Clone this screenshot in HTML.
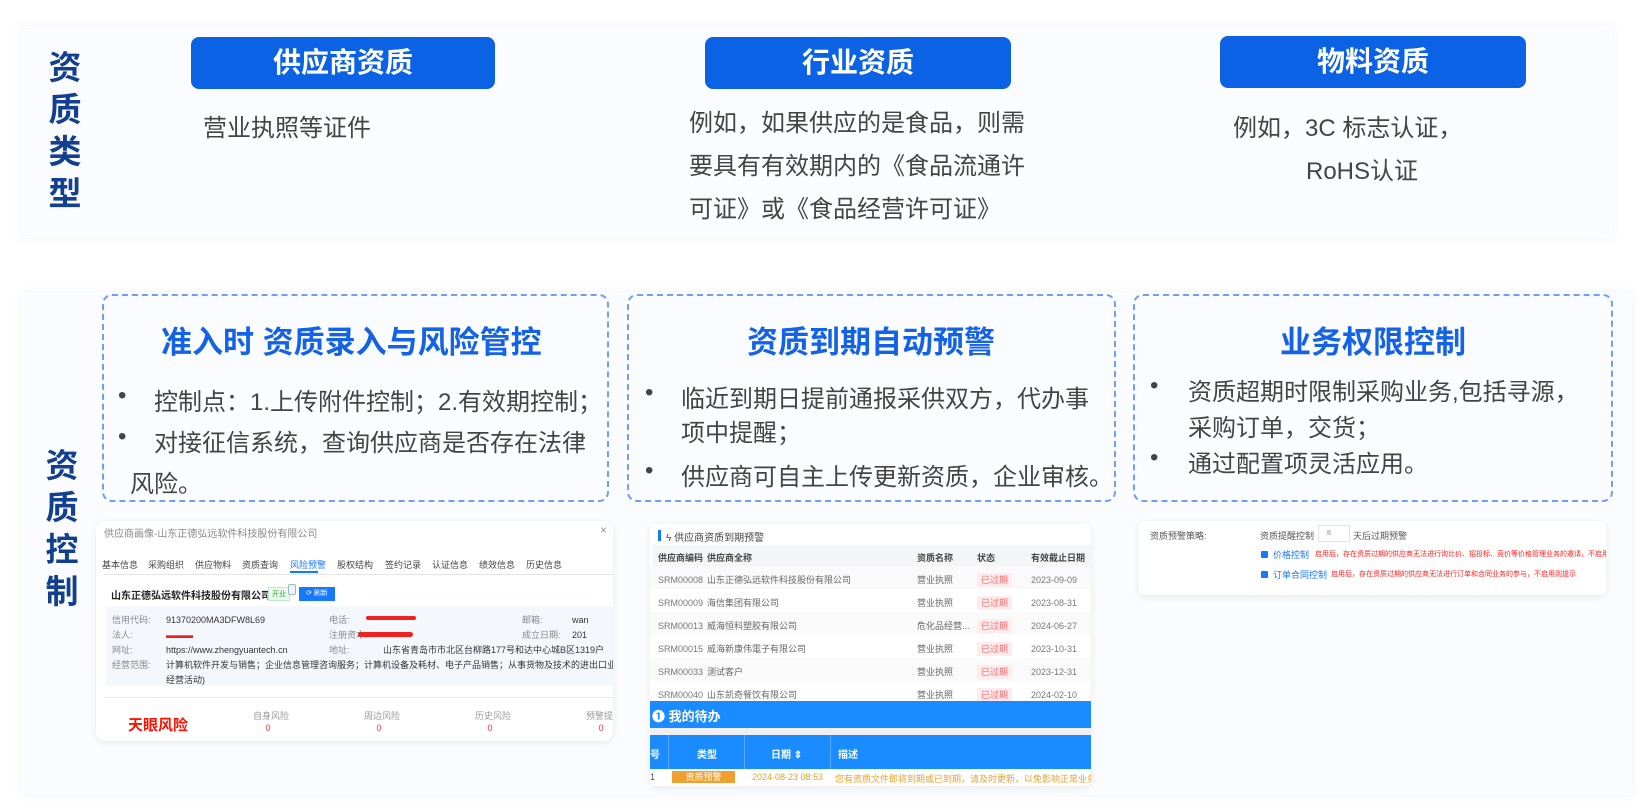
<!DOCTYPE html>
<html><head><meta charset="utf-8">
<style>
*{margin:0;padding:0;box-sizing:border-box}
body{width:1644px;height:810px;background:#fff;position:relative;overflow:hidden;font-family:"Liberation Sans","Noto Sans CJK SC",sans-serif;color:#333}
.a{position:absolute;white-space:nowrap}
.panel{position:absolute;background:#fafcff;box-shadow:0 0 8px rgba(0,0,0,.06)}
.vlab{position:absolute;width:40px;text-align:center;font-weight:bold;font-size:33px;color:#123f8f;line-height:42px}
.hdr{position:absolute;height:52px;background:#0b62e4;border-radius:8px;color:#fff;font-weight:bold;font-size:28px;text-align:center;line-height:52px}
.t22{font-size:24px;color:#444}
.dash{position:absolute;border:2px dashed #6fa0f0;border-radius:10px}
.ttl{position:absolute;font-size:31px;font-weight:bold;color:#1463e6;white-space:nowrap}
.card{position:absolute;background:#fff;border-radius:10px;box-shadow:0 2px 8px rgba(0,0,0,.08);overflow:hidden}
.s9{font-size:9px;color:#666}
</style></head><body>

<div class="panel" style="left:20px;top:26px;width:1593px;height:212px"></div>
<div class="vlab" style="left:45px;top:47px">资<br>质<br>类<br>型</div>
<div class="hdr" style="left:191px;top:37px;width:304px">供应商资质</div>
<div class="hdr" style="left:705px;top:37px;width:306px">行业资质</div>
<div class="hdr" style="left:1220px;top:36px;width:306px">物料资质</div>
<div class="a t22" style="left:203px;top:108px">营业执照等证件</div>
<div class="a t22" style="left:689px;top:102px;line-height:43px">例如，如果供应的是食品，则需<br>要具有有效期内的《食品流通许<br>可证》或《食品经营许可证》</div>
<div class="a t22" style="left:1233px;top:108px">例如，3C 标志认证，</div>
<div class="a t22" style="left:1306px;top:151px">RoHS认证</div>

<div class="panel" style="left:21px;top:292px;width:1611px;height:503px"></div>
<div class="vlab" style="left:42px;top:445px">资<br>质<br>控<br>制</div>

<div class="dash" style="left:102px;top:294px;width:507px;height:208px"></div>
<div class="dash" style="left:627px;top:294px;width:489px;height:208px"></div>
<div class="dash" style="left:1133px;top:294px;width:480px;height:208px"></div>
<div class="ttl" style="left:161px;top:317px">准入时 资质录入与风险管控</div>
<div class="ttl" style="left:747px;top:317px">资质到期自动预警</div>
<div class="ttl" style="left:1280px;top:317px">业务权限控制</div>

<div class="a t22" style="left:118px;top:382px">•</div><div class="a t22" style="left:154px;top:382px">控制点：1.上传附件控制；2.有效期控制；</div>
<div class="a t22" style="left:118px;top:423px">•</div><div class="a t22" style="left:154px;top:423px">对接征信系统，查询供应商是否存在法律</div>
<div class="a t22" style="left:130px;top:464px">风险。</div>

<div class="a t22" style="left:645px;top:379px">•</div><div class="a t22" style="left:681px;top:379px">临近到期日提前通报采供双方，代办事</div>
<div class="a t22" style="left:681px;top:413px">项中提醒；</div>
<div class="a t22" style="left:645px;top:457px">•</div><div class="a t22" style="left:681px;top:457px">供应商可自主上传更新资质，企业审核。</div>

<div class="a t22" style="left:1150px;top:372px">•</div><div class="a t22" style="left:1188px;top:372px">资质超期时限制采购业务,包括寻源，</div>
<div class="a t22" style="left:1188px;top:408px">采购订单，交货；</div>
<div class="a t22" style="left:1150px;top:444px">•</div><div class="a t22" style="left:1188px;top:444px">通过配置项灵活应用。</div>

<!-- left card -->
<div class="card" style="left:96px;top:521px;width:517px;height:220px">
 <div class="a s9" style="left:8px;top:4px;font-size:10px;color:#888">供应商画像-山东正德弘远软件科技股份有限公司</div>
 <div class="a s9" style="left:504px;top:2px;font-size:12px;color:#999">×</div>
 <div class="a s9" style="left:6px;top:37px;color:#444">基本信息</div>
 <div class="a s9" style="left:52px;top:37px;color:#444">采购组织</div>
 <div class="a s9" style="left:99px;top:37px;color:#444">供应物料</div>
 <div class="a s9" style="left:146px;top:37px;color:#444">资质查询</div>
 <div class="a s9" style="left:194px;top:37px;color:#1677ff">风险预警</div>
 <div style="position:absolute;left:194px;top:50px;width:28px;height:2px;background:#1677ff"></div>
 <div class="a s9" style="left:241px;top:37px;color:#444">股权结构</div>
 <div class="a s9" style="left:289px;top:37px;color:#444">签约记录</div>
 <div class="a s9" style="left:336px;top:37px;color:#444">认证信息</div>
 <div class="a s9" style="left:383px;top:37px;color:#444">绩效信息</div>
 <div class="a s9" style="left:430px;top:37px;color:#444">历史信息</div>
 <div style="position:absolute;left:8px;top:53px;width:509px;height:1px;background:#e5e5e5"></div>
 <div class="a" style="left:15px;top:66px;font-size:10px;font-weight:bold;color:#222">山东正德弘远软件科技股份有限公司</div>
 <div class="a" style="left:172px;top:66px;font-size:7px;color:#3a3;background:#eafaf0;border:1px solid #bfe8cc;padding:1px 3px">开业</div>
 <div style="position:absolute;left:192px;top:63px;width:8px;height:11px;border:1px solid #9bb;border-radius:2px;background:#eef3ff"></div>
 <div class="a" style="left:203px;top:66px;width:36px;height:14px;background:#1677ff;color:#fff;font-size:7px;text-align:center;line-height:14px">⟳ 刷新</div>
 <div style="position:absolute;left:10px;top:85px;width:507px;height:80px;background:#f4f8fd"></div>
 <div class="a s9" style="left:16px;top:92px;line-height:15px;color:#888">信用代码:<br>法人:<br>网址:<br>经营范围:</div>
 <div class="a s9" style="left:70px;top:92px;line-height:15px;color:#333">91370200MA3DFW8L69<br><span style="color:#e22">▬▬▬</span><br>https://www.zhengyuantech.cn<br>计算机软件开发与销售；企业信息管理咨询服务；计算机设备及耗材、电子产品销售；从事货物及技术的进出口业务。（依法须经<br>经营活动)</div>
 <div class="a s9" style="left:233px;top:92px;line-height:15px;color:#888">电话:<br>注册资本:</div>
 <div class="a s9" style="left:233px;top:122px;color:#888">地址:</div>
 <div class="a" style="left:270px;top:95px;width:50px;height:4px;background:#e22;border-radius:2px"></div>
 <div class="a" style="left:262px;top:111px;width:55px;height:5px;background:#e22;border-radius:3px"></div>
 <div class="a s9" style="left:287px;top:122px;color:#333">山东省青岛市市北区台柳路177号和达中心城B区1319户</div>
 <div class="a s9" style="left:426px;top:92px;line-height:15px;color:#888">邮箱:<br>成立日期:</div>
 <div class="a s9" style="left:476px;top:92px;line-height:15px;color:#333">wan<br>201</div>
 <div style="position:absolute;left:8px;top:176px;width:509px;height:1px;background:#e8e8e8"></div>
 <div class="a" style="left:32px;top:193px;font-size:15px;font-weight:bold;color:#f10">天眼风险</div>
 <div class="a s9" style="left:157px;top:189px;width:30px;text-align:center;color:#999;line-height:12px">自身风险<br><span style="color:#f33">0</span></div>
 <div class="a s9" style="left:268px;top:189px;width:30px;text-align:center;color:#999;line-height:12px">周边风险<br><span style="color:#f33">0</span></div>
 <div class="a s9" style="left:379px;top:189px;width:30px;text-align:center;color:#999;line-height:12px">历史风险<br><span style="color:#f33">0</span></div>
 <div class="a s9" style="left:490px;top:189px;width:30px;text-align:center;color:#999;line-height:12px">预警提醒<br><span style="color:#f33">0</span></div>
</div>

<!-- middle card -->
<div class="card" style="left:650px;top:524px;width:441px;height:262px;border-radius:6px">
 <div style="position:absolute;left:8px;top:6px;width:3px;height:11px;background:#1677ff"></div>
 <div class="a s9" style="left:16px;top:5px;font-size:10px;color:#444">ϟ 供应商资质到期预警</div>
 <div style="position:absolute;left:2px;top:21px;width:439px;height:21px;background:#f4f5f7"></div>
 <div class="a s9" style="left:8px;top:27px;color:#444;font-weight:bold">供应商编码</div>
 <div class="a s9" style="left:57px;top:27px;color:#444;font-weight:bold">供应商全称</div>
 <div class="a s9" style="left:267px;top:27px;color:#444;font-weight:bold">资质名称</div>
 <div class="a s9" style="left:327px;top:27px;color:#444;font-weight:bold">状态</div>
 <div class="a s9" style="left:381px;top:27px;color:#444;font-weight:bold">有效截止日期</div>
 <div style="position:absolute;left:0;top:42px;width:441px;height:23px;background:#fafafa"></div>
 <div style="position:absolute;left:0;top:88px;width:441px;height:23px;background:#fafafa"></div>
 <div style="position:absolute;left:0;top:134px;width:441px;height:23px;background:#fafafa"></div>
 <div class="a s9" style="left:8px;top:45px;line-height:23px;color:#777">SRM00008<br>SRM00009<br>SRM00013<br>SRM00015<br>SRM00033<br>SRM00040</div>
 <div class="a s9" style="left:57px;top:45px;line-height:23px;color:#666">山东正德弘远软件科技股份有限公司<br>海信集团有限公司<br>威海恒科塑胶有限公司<br>威海新康伟電子有限公司<br>测试客户<br>山东凯奇餐饮有限公司</div>
 <div class="a s9" style="left:267px;top:45px;line-height:23px;color:#666">营业执照<br>营业执照<br>危化品经营...<br>营业执照<br>营业执照<br>营业执照</div>
 <div class="a s9" style="left:327px;top:45px;line-height:23px;color:#f56c6c"><span style="background:#fdeced;padding:2px 4px">已过期</span><br><span style="background:#fdeced;padding:2px 4px">已过期</span><br><span style="background:#fdeced;padding:2px 4px">已过期</span><br><span style="background:#fdeced;padding:2px 4px">已过期</span><br><span style="background:#fdeced;padding:2px 4px">已过期</span><br><span style="background:#fdeced;padding:2px 4px">已过期</span></div>
 <div class="a s9" style="left:381px;top:45px;line-height:23px;color:#777">2023-09-09<br>2023-08-31<br>2024-06-27<br>2023-10-31<br>2023-12-31<br>2024-02-10</div>
 <div style="position:absolute;left:0;top:177px;width:441px;height:27px;background:#1a8cff"></div>
 <div class="a" style="left:2px;top:182px;font-size:13px;font-weight:bold;color:#fff">❶ 我的待办</div>
 <div style="position:absolute;left:0;top:204px;width:441px;height:7px;background:#eef0f3"></div>
 <div style="position:absolute;left:0;top:211px;width:441px;height:34px;background:#1a8cff"></div>
 <div style="position:absolute;left:18px;top:211px;width:1px;height:34px;background:#5aaaff"></div>
 <div style="position:absolute;left:94px;top:211px;width:1px;height:34px;background:#5aaaff"></div>
 <div style="position:absolute;left:180px;top:211px;width:1px;height:34px;background:#5aaaff"></div>
 <div class="a" style="left:0;top:222px;font-size:10px;font-weight:bold;color:#fff">号</div>
 <div class="a" style="left:47px;top:222px;font-size:10px;font-weight:bold;color:#fff">类型</div>
 <div class="a" style="left:121px;top:222px;font-size:10px;font-weight:bold;color:#fff">日期 ⇕</div>
 <div class="a" style="left:188px;top:222px;font-size:10px;font-weight:bold;color:#fff">描述</div>
 <div class="a s9" style="left:0;top:248px;color:#555">1</div>
 <div class="a s9" style="left:22px;top:247px;width:63px;height:12px;background:#f0a030;color:#fff;text-align:center;line-height:12px">资质预警</div>
 <div class="a s9" style="left:102px;top:248px;color:#e8a030">2024-08-23 08:53</div>
 <div class="a s9" style="left:185px;top:248px;color:#e8a030">您有资质文件即将到期或已到期，请及时更新，以免影响正常业务!</div>
</div>

<!-- right card -->
<div class="card" style="left:1139px;top:521px;width:467px;height:74px;border-radius:6px">
 <div class="a s9" style="left:11px;top:8px;color:#555">资质预警策略:</div>
 <div class="a s9" style="left:121px;top:8px;color:#555">资质提醒控制</div>
 <div class="a" style="left:179px;top:4px;width:32px;height:17px;border:1px solid #e3e3e3;font-size:7px;color:#888;padding:4px 0 0 8px">8</div>
 <div class="a s9" style="left:214px;top:8px;color:#555">天后过期预警</div>
 <div class="a" style="left:122px;top:30px;width:7px;height:7px;background:#1677ff;border-radius:1px"></div>
 <div class="a s9" style="left:134px;top:27px;color:#1677ff">价格控制</div>
 <div class="a" style="left:176px;top:28px;font-size:7px;color:#f22">启用后，存在资质过期的供应商无法进行询比价、招投标、竞价等价格管理业务的邀请，不启用则提示</div>
 <div class="a" style="left:122px;top:50px;width:7px;height:7px;background:#1677ff;border-radius:1px"></div>
 <div class="a s9" style="left:134px;top:47px;color:#1677ff">订单合同控制</div>
 <div class="a" style="left:192px;top:48px;font-size:7px;color:#f22">启用后，存在资质过期的供应商无法进行订单和合同业务的参与，不启用则提示</div>
</div>

</body></html>
